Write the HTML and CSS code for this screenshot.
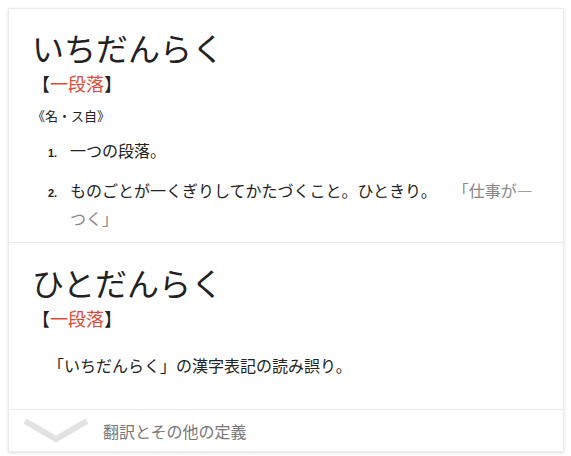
FILE: index.html
```html
<!DOCTYPE html>
<html lang="ja">
<head>
<meta charset="utf-8">
<link rel="stylesheet" href="styles.css">
</head>
<body>
<div class="card">
  <section class="entry entry-first">
    <h1 class="head">いちだんらく</h1>
    <div class="kanji"><span class="br">【</span><span class="red">一段落</span><span class="br">】</span></div>
    <div class="pos">《名・ス自》</div>
    <ol class="defs">
      <li class="def"><span class="num">1.</span><span class="txt">一つの段落。</span></li>
      <li class="def"><span class="num">2.</span><span class="txt">ものごとが一くぎりしてかたづくこと。ひときり。<span class="ex">「仕事が―つく」</span></span></li>
    </ol>
  </section>
  <section class="entry entry-second">
    <h1 class="head">ひとだんらく</h1>
    <div class="kanji"><span class="br">【</span><span class="red">一段落</span><span class="br">】</span></div>
    <p class="plain">「いちだんらく」の漢字表記の読み誤り。</p>
  </section>
  <div class="footer">
    <svg class="chev" width="66" height="26" viewBox="0 0 66 26"><polyline points="2,3 33,21 64,3" fill="none" stroke="#e2e2e2" stroke-width="6"/></svg>
    <span class="more">翻訳とその他の定義</span>
  </div>
</div>
</body>
</html>
```

FILE: styles.css
```css
html, body {
  margin: 0;
  padding: 0;
  background: #fff;
}
body {
  padding: 8px;
  font-family: "Noto Sans CJK JP", "Noto Sans", sans-serif;
  color: #222;
}
.card {
  width: 554px;
  border: 1px solid #ebebeb;
  box-shadow: 0 1px 3px rgba(0,0,0,0.12);
  background: #fff;
}
.entry {
  padding: 19px 18px 10px 23px;
  border-bottom: 1px solid #ebebeb;
}
.entry-second {
  padding-top: 20px;
  padding-bottom: 30px;
}
.head {
  margin: 0;
  font-size: 32px;
  line-height: 38px;
  font-weight: normal;
  color: #222;
}
.kanji {
  margin-top: 5px;
  font-size: 18px;
  line-height: 24px;
}
.br { color: #222; }
.red { color: #dd4b39; }
.pos {
  margin-top: 12px;
  font-size: 13px;
  line-height: 18px;
}
.defs {
  list-style: none;
  margin: 11px 0 0 16px;
  padding: 0;
}
.def {
  display: flex;
  align-items: baseline;
  font-size: 16px;
  line-height: 28px;
}
.def + .def { margin-top: 9px; }
.num {
  width: 22px;
  flex: none;
  font-family: "Liberation Sans", Arial, sans-serif;
  font-size: 11px;
  font-weight: bold;
}
.txt { flex: 1; }
.ex {
  color: #878787;
  margin-left: 24px;
}
.plain {
  margin: 21px 0 0 16px;
  font-size: 16px;
  line-height: 28px;
}
.footer {
  display: flex;
  align-items: center;
  padding: 8px 0 7px 14px;
}
.chev { flex: none; }
.more {
  margin-left: 14px;
  font-size: 16px;
  line-height: 26px;
  color: #777;
}
```
